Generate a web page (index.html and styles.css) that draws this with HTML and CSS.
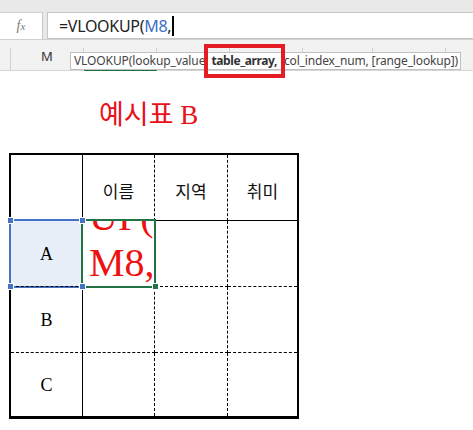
FILE: index.html
```html
<!DOCTYPE html>
<html lang="ko">
<head>
<meta charset="utf-8">
<link rel="stylesheet" href="styles.css">
</head>
<body>
<div class="app">
  <div class="topstrip"></div>
  <div class="fbar">
    <div class="namebox"><span class="fx"><i>f</i><i class="fxx">x</i></span></div>
    <div class="finput"><span class="ftext">=VLOOKUP(<span class="ref">M8</span>,</span><span class="caret"></span></div>
  </div>
  <div class="colhead">
    <div class="rowhd"></div>
    <div class="colcell">M</div>
    <div class="colcell sel"></div>
    <div class="colcell"></div>
    <div class="colcell"></div>
    <div class="colcell narrow"></div>
    <div class="colcell"></div>
  </div>
  <div class="tooltip">VLOOKUP(lookup_value, <b>table_array,</b><span class="rest"> col_index_num, [range_lookup])</span></div>
  <div class="redbox"></div>
  <div class="sheet">
    <div class="title">예시표 B</div>
    <div class="grid">
      <div class="cell rs bs"></div>
      <div class="cell rd bs hd">이름</div>
      <div class="cell rd bs hd">지역</div>
      <div class="cell bs hd">취미</div>

      <div class="cell rs bd lbl">A</div>
      <div class="cell rd bd"></div>
      <div class="cell rd bd"></div>
      <div class="cell bd"></div>

      <div class="cell rs bd lbl">B</div>
      <div class="cell rd bd"></div>
      <div class="cell rd bd"></div>
      <div class="cell bd"></div>

      <div class="cell rs lbl">C</div>
      <div class="cell rd"></div>
      <div class="cell rd"></div>
      <div class="cell"></div>

      <div class="selblue"></div>
      <div class="selgreen"></div>
      <div class="celltext"><div>UP(</div><div>M8,</div></div>
      <div class="handle h-b1"></div>
      <div class="handle h-b2"></div>
      <div class="handle h-b3"></div>
      <div class="handle h-b4"></div>
      <div class="handle green h-g"></div>
    </div>
  </div>
</div>
</body>
</html>
```

FILE: styles.css
```css
html, body {
  margin: 0;
  padding: 0;
  background: #ffffff;
}
.app {
  position: relative;
  width: 473px;
  height: 430px;
  overflow: hidden;
  background: #ffffff;
}
.topstrip {
  height: 12px;
  background: #e9e9e9;
}
.fbar {
  display: flex;
  height: 27px;
  background: #e9e9e9;
  border-bottom: 1px solid #d0d0d0;
}
.namebox {
  width: 43px;
  background: #ffffff;
  border-right: 1px solid #c8c8c8;
  border-top: 1px solid #d0d0d0;
  display: flex;
  align-items: center;
  justify-content: center;
  box-sizing: border-box;
}
.fx {
  font-family: "Liberation Serif", serif;
  font-size: 14px;
  color: #7a7a7a;
}
.fxx {
  font-size: 11px;
}
.finput {
  flex: 1;
  margin-left: 4px;
  background: #ffffff;
  border: 1px solid #c6c6c6;
  border-right: none;
  display: flex;
  align-items: center;
  padding-left: 11px;
  box-sizing: border-box;
}
.ftext {
  font-family: "Noto Sans", sans-serif;
  font-size: 16px;
  color: #222222;
  letter-spacing: -0.3px;
}
.ref {
  color: #3a6fc4;
}
.caret {
  width: 1.5px;
  height: 20px;
  background: #000000;
  margin-left: 1px;
}
.colhead {
  display: flex;
  height: 31px;
  background: #f2f2f2;
  border-bottom: 1px solid #d6d6d6;
  box-sizing: border-box;
}
.rowhd {
  width: 10px;
  border-right: 1px solid #d0d0d0;
  margin-top: 8px;
}
.colcell {
  width: 72px;
  border-right: 1px solid #d0d0d0;
  margin-top: 8px;
  display: flex;
  align-items: center;
  justify-content: center;
  font-family: "Noto Sans", sans-serif;
  font-size: 13px;
  color: #333333;
  padding-bottom: 6px;
  box-sizing: content-box;
}
.colcell.sel {
  border-bottom: 2px solid #217346;
  margin-bottom: -1px;
}
.colcell.narrow {
  width: 69px;
}
.tooltip {
  position: absolute;
  left: 70px;
  top: 52px;
  width: 391px;
  height: 18px;
  box-sizing: border-box;
  background: #ffffff;
  border: 1px solid #c0c0c0;
  font-family: "Noto Sans", sans-serif;
  font-size: 12px;
  line-height: 16px;
  color: #444444;
  padding-left: 3px;
  white-space: nowrap;
  letter-spacing: -0.1px;
}
.tooltip b {
  color: #333333;
  letter-spacing: -0.4px;
}
.tooltip .rest {
  padding-left: 4px;
  letter-spacing: -0.15px;
}
.redbox {
  position: absolute;
  left: 204px;
  top: 44px;
  width: 81px;
  height: 34px;
  box-sizing: border-box;
  border: 4px solid #e51c23;
}
.sheet {
  padding-top: 28px;
}
.title {
  margin-left: 99px;
  height: 32px;
  line-height: 32px;
  font-family: "Liberation Serif", "Noto Sans CJK KR", serif;
  font-size: 27px;
  color: #e8101a;
}
.grid {
  position: relative;
  margin-top: 22px;
  margin-left: 9px;
  width: 290px;
  box-sizing: border-box;
  border: 2px solid #000000;
  border-bottom-width: 3px;
  display: grid;
  grid-template-columns: 72px 72px 73px 69px;
  grid-template-rows: 66px 66px 66px 63px;
}
.cell {
  box-sizing: border-box;
  display: flex;
  align-items: center;
  justify-content: center;
}
.rs { border-right: 1px solid #000000; }
.rd { border-right: 1px dashed #000000; }
.bs { border-bottom: 1px solid #000000; }
.bd { border-bottom: 1px dashed #000000; }
.hd {
  font-family: "Noto Sans CJK KR", sans-serif;
  font-size: 17px;
  color: #111111;
  padding-top: 5px;
}
.lbl {
  position: relative;
  z-index: 2;
  font-family: "Liberation Serif", serif;
  font-size: 18px;
  color: #000000;
  padding-top: 2px;
}
.selblue {
  position: absolute;
  left: -2px;
  top: 64px;
  width: 74px;
  height: 69px;
  box-sizing: border-box;
  border: 2px solid #4472c4;
  background: #e8eef8;
  z-index: 1;
}
.selgreen {
  position: absolute;
  left: 70px;
  top: 64px;
  width: 75px;
  height: 69px;
  box-sizing: border-box;
  border: 2px solid #217346;
  z-index: 2;
}
.celltext {
  position: absolute;
  left: 72px;
  top: 66px;
  width: 71px;
  height: 65px;
  overflow: hidden;
  display: flex;
  flex-direction: column;
  justify-content: flex-end;
  padding-left: 6px;
  box-sizing: border-box;
  font-family: "Liberation Serif", serif;
  font-size: 40px;
  line-height: 46px;
  color: #ee1111;
  white-space: nowrap;
  z-index: 1;
}
.celltext div {
  height: 46px;
  flex: none;
}
.handle {
  position: absolute;
  width: 5px;
  height: 5px;
  background: #4472c4;
  border: 1px solid #ffffff;
  z-index: 3;
}
.handle.green {
  background: #217346;
}
.h-b1 { left: -4px; top: 62px; }
.h-b2 { left: 68px; top: 62px; }
.h-b3 { left: -4px; top: 128px; }
.h-b4 { left: 68px; top: 128px; }
.h-g { left: 141px; top: 128px; }
```
